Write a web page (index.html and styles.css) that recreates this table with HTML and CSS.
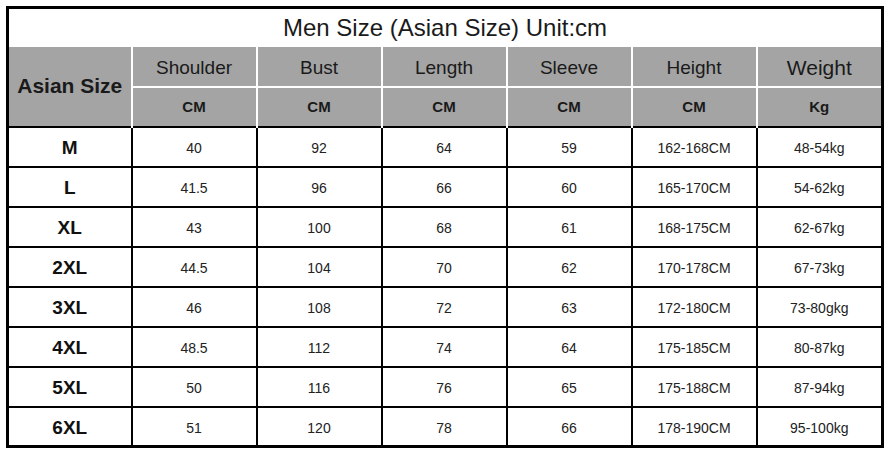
FILE: index.html
```html
<!DOCTYPE html>
<html>
<head>
<meta charset="utf-8">
<link rel="stylesheet" href="styles.css">
</head>
<body>
<table class="chart">
  <colgroup>
    <col class="c-first">
    <col class="c-std">
    <col class="c-std">
    <col class="c-std">
    <col class="c-std">
    <col class="c-std">
    <col class="c-last">
  </colgroup>
  <thead>
    <tr class="title-row"><th colspan="7" class="title">Men Size (Asian Size) Unit:cm</th></tr>
    <tr class="head1">
      <th rowspan="2" class="hcell asian">Asian Size</th>
      <th class="hcell name">Shoulder</th>
      <th class="hcell name">Bust</th>
      <th class="hcell name">Length</th>
      <th class="hcell name">Sleeve</th>
      <th class="hcell name">Height</th>
      <th class="hcell name big last">Weight</th>
    </tr>
    <tr class="head2">
      <th class="hcell unit">CM</th>
      <th class="hcell unit">CM</th>
      <th class="hcell unit">CM</th>
      <th class="hcell unit">CM</th>
      <th class="hcell unit">CM</th>
      <th class="hcell unit last">Kg</th>
    </tr>
  </thead>
  <tbody>
    <tr><td class="size">M</td><td>40</td><td>92</td><td>64</td><td>59</td><td>162-168CM</td><td class="last">48-54kg</td></tr>
    <tr><td class="size">L</td><td>41.5</td><td>96</td><td>66</td><td>60</td><td>165-170CM</td><td class="last">54-62kg</td></tr>
    <tr><td class="size">XL</td><td>43</td><td>100</td><td>68</td><td>61</td><td>168-175CM</td><td class="last">62-67kg</td></tr>
    <tr><td class="size">2XL</td><td>44.5</td><td>104</td><td>70</td><td>62</td><td>170-178CM</td><td class="last">67-73kg</td></tr>
    <tr><td class="size">3XL</td><td>46</td><td>108</td><td>72</td><td>63</td><td>172-180CM</td><td class="last">73-80gkg</td></tr>
    <tr><td class="size">4XL</td><td>48.5</td><td>112</td><td>74</td><td>64</td><td>175-185CM</td><td class="last">80-87kg</td></tr>
    <tr><td class="size">5XL</td><td>50</td><td>116</td><td>76</td><td>65</td><td>175-188CM</td><td class="last">87-94kg</td></tr>
    <tr><td class="size">6XL</td><td>51</td><td>120</td><td>78</td><td>66</td><td>178-190CM</td><td class="last">95-100kg</td></tr>
  </tbody>
</table>
</body>
</html>
```

FILE: styles.css
```css
html, body {
  margin: 0;
  padding: 0;
  background: #ffffff;
}

body {
  padding: 6px 0 0 6px;
  font-family: "Liberation Sans", Arial, sans-serif;
  color: #1e1e1e;
}

.chart {
  border-collapse: collapse;
  table-layout: fixed;
  width: 878px;
  border: 3px solid #000;
}

.c-first { width: 124px; }
.c-std { width: 125px; }
.c-last { width: 126px; }

.chart th,
.chart td {
  padding: 0;
  text-align: center;
  vertical-align: middle;
}

.title-row { height: 39px; }

.title {
  font-weight: normal;
  font-size: 24px;
  color: #1a1a1a;
  background: #fff;
  padding-top: 2px;
}

.head1, .head2 { height: 40px; }

.hcell {
  background: #a4a4a4;
  border-right: 2px solid #fff;
  color: #1a1a1a;
}

.hcell.last { border-right: none; }

.head1 .name {
  border-bottom: 2px solid #fff;
  font-weight: normal;
  font-size: 19px;
  padding-top: 3px;
}

.head1 .name.big { font-size: 21px; }

.asian {
  font-size: 21px;
  font-weight: bold;
  padding-top: 5px;
}

.unit {
  font-size: 15px;
  font-weight: bold;
  padding-top: 4px;
}

.chart tbody tr { height: 40px; }

.chart td {
  border-top: 2px solid #000;
  border-right: 2px solid #000;
  font-size: 14px;
  color: #222;
  padding-top: 3px;
}

.chart td.last { border-right: none; }

.chart td.size {
  font-size: 19px;
  font-weight: bold;
  color: #111;
}
```
